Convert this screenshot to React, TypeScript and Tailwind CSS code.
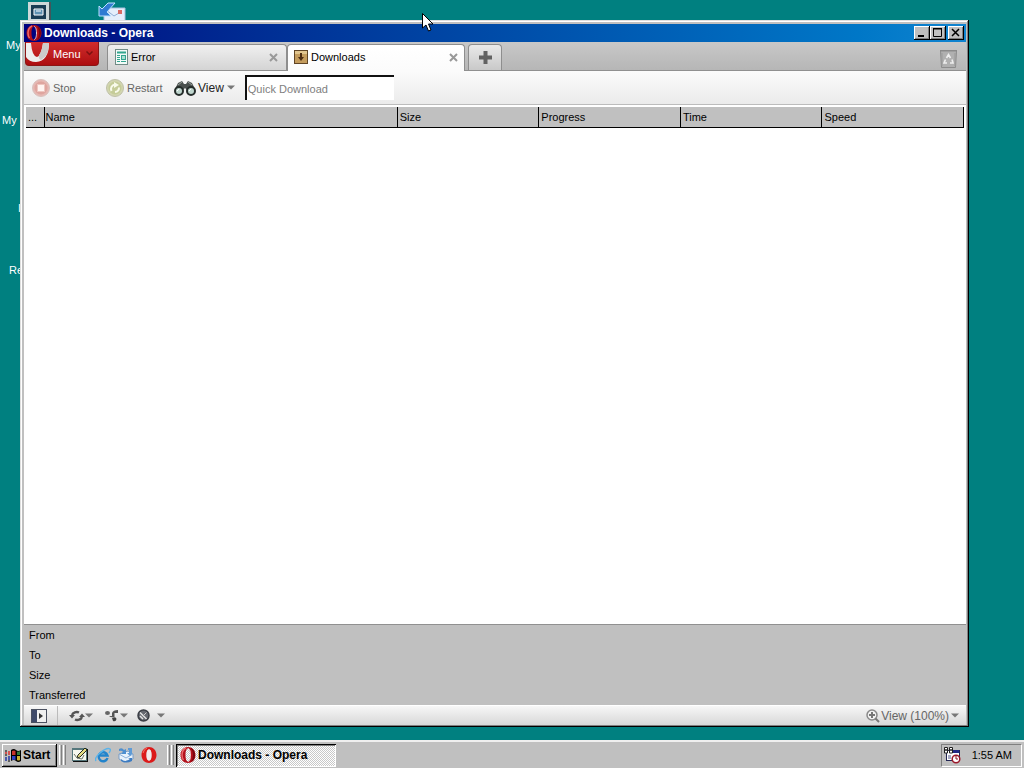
import type { ReactNode } from 'react';

const raised = 'bg-[#c0c0c0] shadow-[inset_-1px_-1px_#000,inset_1px_1px_#fff,inset_-2px_-2px_#808080]';

function OperaLogo() {
  return (
    <svg width="16" height="16" viewBox="0 0 16 16" className="shrink-0" aria-hidden="true">
      <path
        fillRule="evenodd"
        d="M8 0C12 0 15.5 3 15.5 8S12 16 8 16S0.5 13 0.5 8S4 0 8 0ZM8 1.500C6.500 1.500 5.500 4 5.500 8S6.500 14.500 8 14.500S10.500 12 10.500 8S9.500 1.500 8 1.500Z"
        fill="#b3101b"
      />
      <path d="M6 1Q2 3 2 8Q2 11 3.500 13" fill="none" stroke="#ea6a6d" strokeWidth="1.500" />
      <path d="M11 1Q15 3 15 8Q15 13 11 15Q13 12 13 8Q13 4 11 1Z" fill="#79060f" />
      <path d="M8 1.500C9.500 1.500 10.500 4 10.500 8S9.500 14.500 8 14.500" fill="none" stroke="#e9c9c9" />
    </svg>
  );
}

function Caret() {
  return (
    <svg width="8" height="5" viewBox="0 0 8 5" className="shrink-0" aria-hidden="true">
      <path d="M0 0.5H8L4 4.5Z" fill="#777" />
    </svg>
  );
}

function CloseMark() {
  return (
    <svg width="9" height="9" viewBox="0 0 9 9" aria-hidden="true">
      <path d="M1 1L8 8M8 1L1 8" stroke="#999" strokeWidth="2" />
    </svg>
  );
}

function ErrorPageIcon() {
  return (
    <svg width="13" height="16" viewBox="0 0 13 16" aria-hidden="true">
      <rect x="0.5" y="0.5" width="12" height="15" fill="#f3fbf8" stroke="#718b86" />
      <path d="M2 3.500H11" stroke="#32a58f" strokeWidth="2" />
      <path d="M2 6.500H5M2 8.500H5M2 10.500H5M2 12.500H5M6 12.500H11" stroke="#32a58f" />
      <rect x="6.500" y="6.500" width="4" height="4" fill="#a9ded3" stroke="#32a58f" />
    </svg>
  );
}

function DownloadIcon() {
  return (
    <svg width="14" height="14" viewBox="0 0 14 14" aria-hidden="true">
      <rect x="0.5" y="0.5" width="13" height="13" fill="#c49c5d" stroke="#604526" />
      <path d="M1 1H13V4H1Z" fill="#e1c58e" />
      <path d="M6 3H8V7H10L7 11L4 7H6Z" fill="#4b2c12" />
    </svg>
  );
}

function StopIcon() {
  return (
    <svg width="18" height="18" viewBox="0 0 18 18" aria-hidden="true">
      <circle cx="9" cy="9" r="8.5" fill="#e6b8b3" stroke="#d8c0bd" />
      <circle cx="9" cy="9" r="6.5" fill="#dfa59f" />
      <rect x="5.5" y="5.5" width="7" height="7" fill="#fff4f1" stroke="#eec6c0" />
    </svg>
  );
}

function RestartIcon() {
  return (
    <svg width="18" height="18" viewBox="0 0 18 18" aria-hidden="true">
      <circle cx="9" cy="9" r="8.5" fill="#d3d6b0" stroke="#bfc1a8" />
      <circle cx="9" cy="9" r="6.5" fill="#c5cc98" />
      <path d="M5.500 12A4.500 4.500 0 0 1 9 5.500" fill="none" stroke="#f8faea" strokeWidth="2" />
      <path d="M8 3L13 6L8 9Z" fill="#f8faea" />
      <path d="M13 8.500A4.500 4.500 0 0 1 9 13" fill="none" stroke="#f8faea" strokeWidth="2" />
    </svg>
  );
}

function BinocularsIcon() {
  return (
    <svg width="22" height="16" viewBox="0 0 22 16" aria-hidden="true">
      <path d="M1 9L4 3L8 1L10 4H12L14 1L18 3L21 9L14 11L11 8L8 11Z" fill="#4a504e" />
      <path d="M4 5L8 2M14 2L18 5" stroke="#9ba39f" />
      <circle cx="5" cy="11" r="4" fill="#bed5cd" stroke="#252c2a" strokeWidth="2" />
      <circle cx="17" cy="11" r="4" fill="#bed5cd" stroke="#252c2a" strokeWidth="2" />
      <path d="M3 11L5 9M15 11L17 9" stroke="#fff" />
    </svg>
  );
}

function TrashIcon() {
  return (
    <svg width="19" height="20" viewBox="0 0 19 20" aria-hidden="true">
      <path d="M1.500 2H17.500L16.500 18.500H2.500Z" fill="#b0b0b0" stroke="#8c8c8c" />
      <path d="M1 1.500H18" stroke="#8a8a8a" />
      <path d="M3 4V17M16 4V17" stroke="#999" />
      <path d="M7.500 9L9.500 5.500L11.500 9M13 10.500L14 14H11M8 14H5L6.500 10.500" fill="none" stroke="#eee" strokeWidth="1.600" />
    </svg>
  );
}

function PanelIcon() {
  return (
    <svg width="16" height="14" viewBox="0 0 16 14" aria-hidden="true">
      <rect x="0.5" y="0.5" width="15" height="13" fill="#f0f0f0" stroke="#4b5160" />
      <rect x="1" y="1" width="5" height="12" fill="#3f4a69" />
      <path d="M8 4L12 7L8 10Z" fill="#333" />
    </svg>
  );
}

function SyncIcon() {
  return (
    <svg width="16" height="12" viewBox="0 0 16 12" aria-hidden="true">
      <path d="M3 5A5 4.500 0 0 1 10 2.500M13 7A5 4.500 0 0 1 6 9.500" fill="none" stroke="#555" strokeWidth="2.400" />
      <path d="M0 5H6L3 8.500ZM10 7H16L13 3.500Z" fill="#555" />
    </svg>
  );
}

function UniteIcon() {
  return (
    <svg width="14" height="13" viewBox="0 0 14 13" aria-hidden="true">
      <ellipse cx="2.500" cy="4" rx="2.500" ry="2" fill="#666" />
      <path d="M4 7H7V4Q8 1 13 1V4H9.500V8Q6 9 4 7Z" fill="#555" />
      <path d="M7 9Q11 7 11.500 10Q11 13 8 12Z" fill="#444" />
    </svg>
  );
}

function TurboIcon() {
  return (
    <svg width="13" height="13" viewBox="0 0 13 13" aria-hidden="true">
      <circle cx="6.500" cy="6.500" r="5.500" fill="#656870" stroke="#3b3e45" strokeWidth="1.500" />
      <path d="M3 3.500L9.500 10M3 7L6 10" stroke="#e2e2e2" strokeWidth="1.500" />
      <path d="M6 7L9.500 3.500" stroke="#c8c8c8" />
    </svg>
  );
}

function ZoomIcon() {
  return (
    <svg width="14" height="14" viewBox="0 0 14 14" aria-hidden="true">
      <circle cx="6" cy="6" r="5" fill="#f2f2f2" stroke="#8a8a8a" strokeWidth="1.500" />
      <path d="M3 6H9M6 3V9" stroke="#777" strokeWidth="2" />
      <path d="M9.500 9.500L13 13" stroke="#777" strokeWidth="2" />
    </svg>
  );
}

function WindowsFlag() {
  return (
    <svg width="17" height="15" viewBox="0 0 17 15" aria-hidden="true">
      <path d="M6 2Q9 0 11 2T16 2V13Q13 15 11 13T6 13Z" fill="#000" />
      <path d="M7 3Q9 2 10.500 3V7H7Z" fill="#c9332b" />
      <path d="M12 3.500Q13.500 4 15 3V7H12Z" fill="#2d7b3c" />
      <path d="M7 8H10.500V12Q9 11.500 7 12Z" fill="#3043c6" />
      <path d="M12 8H15V12Q13.500 13 12 12Z" fill="#c9b032" />
      <path d="M3 4H5M3 6H5M0 5H2" stroke="#d8322e" strokeWidth="1.500" />
      <path d="M3 9H5M3 11H5M0 10H2M0 12H2" stroke="#2436a4" strokeWidth="1.500" />
      <path d="M0 3H2M0 7H2M3 13H5" stroke="#000" />
    </svg>
  );
}

function ShowDesktopIcon() {
  return (
    <svg width="16" height="16" viewBox="0 0 16 16" aria-hidden="true">
      <path d="M1 2H16V15H1Z" fill="#111" />
      <path d="M0 1H15V14H0Z" fill="#55777c" />
      <path d="M1 3H14V13H1Z" fill="#f6f8ef" />
      <path d="M5 11L6 8L13 1L15 3L8 10Z" fill="#e5dd83" stroke="#262b20" />
      <path d="M2 7L5 11L10 12L12 8" fill="none" stroke="#6e756b" />
    </svg>
  );
}

function ExplorerIcon() {
  return (
    <svg width="16" height="16" viewBox="0 0 16 16" aria-hidden="true">
      <path d="M12.500 11A4.500 4.500 0 1 1 12.500 8.500H5" fill="none" stroke="#2384cc" strokeWidth="2.400" />
      <path d="M1 14Q-1 11 5 6Q12 0 15 2Q16 3 14 6" fill="none" stroke="#5ab3ea" strokeWidth="1.400" />
    </svg>
  );
}

function MailIcon() {
  return (
    <svg width="16" height="16" viewBox="0 0 16 16" aria-hidden="true">
      <path d="M1 7L10 4L15 7V12L6 15L1 12Z" fill="#e8f2fc" stroke="#7a9cc4" />
      <path d="M1 7L8 11L15 7" fill="none" stroke="#8db0d8" />
      <path d="M1 2Q4 0 6 3L8 2V7H3L5 5Q4 3 1 4Z" fill="#4e8fd0" />
      <path d="M10 1H14V7L12 9L9 6H11V3H10Z" fill="#5f9bd6" />
      <path d="M3 12Q7 16 12 12L10 11H14V14Q8 17 3 14Z" fill="#3d7cc2" />
    </svg>
  );
}

function QuickOperaIcon() {
  return (
    <svg width="16" height="16" viewBox="0 0 16 16" aria-hidden="true">
      <path
        fillRule="evenodd"
        d="M8 0C12 0 15.500 3 15.500 8S12 16 8 16S0.500 13 0.500 8S4 0 8 0ZM8 2.500C6 2.500 5.500 5 5.500 8S6 13.500 8 13.500S10.500 11 10.500 8S10 2.500 8 2.500Z"
        fill="#dc1a1a"
      />
      <path d="M8 2.500C10 2.500 10.500 5 10.500 8S10 13.500 8 13.500S5.500 11 5.500 8S6 2.500 8 2.500Z" fill="#f4eaea" />
      <path d="M2 6Q3 2 6 1" stroke="#f47666" fill="none" />
    </svg>
  );
}

function SchedulerIcon() {
  return (
    <svg width="17" height="17" viewBox="0 0 17 17" aria-hidden="true">
      <rect x="2.500" y="3.500" width="13" height="10" fill="#fff" stroke="#222653" />
      <path d="M8 4.500H15" stroke="#202884" strokeWidth="3" />
      <path d="M0.500 0.500H3.500V3H0.500ZM0.500 3H3.500V6H0.500ZM5.500 0.500H8.500V3H5.500ZM5.500 3H8.500V6H5.500Z" fill="#fff" stroke="#222" />
      <path d="M4 9H7M4 11H7" stroke="#51578c" />
      <circle cx="12" cy="12" r="3.800" fill="#fff" stroke="#9b1729" strokeWidth="1.500" />
      <path d="M12 9V12H14" fill="none" stroke="#861020" />
    </svg>
  );
}

function CaptionButton({ label, children }: { label: string; children: ReactNode }) {
  return (
    <button aria-label={label} className={`flex h-[14px] w-4 items-center justify-center ${raised}`}>
      <svg width="16" height="14" viewBox="0 0 16 14" aria-hidden="true" fill="none" stroke="#000">
        {children}
      </svg>
    </button>
  );
}

function TitleBar() {
  return (
    <header className="flex h-[18px] shrink-0 items-center bg-linear-to-r from-[#000080] to-[#1084d0] pr-[2px] pl-[2px] text-white">
      <OperaLogo />
      <h1 className="ml-[2px] flex-1 text-[12px] leading-4 font-bold">Downloads - Opera</h1>
      <div className="flex">
        <CaptionButton label="Minimize">
          <path d="M4 10H10" strokeWidth="2" />
        </CaptionButton>
        <CaptionButton label="Maximize">
          <path d="M3.500 2V10.500H11.500V2M3 3H12" />
          <path d="M3 2.500H12" />
        </CaptionButton>
        <div className="ml-[2px]">
          <CaptionButton label="Close">
            <path d="M4 3L11 10M11 3L4 10" strokeWidth="1.500" />
          </CaptionButton>
        </div>
      </div>
    </header>
  );
}

function TabBar() {
  return (
    <nav className="flex h-[29px] shrink-0 items-end border-b border-[#909090] bg-linear-to-b from-[#c8c8c8] to-[#b6b6b6]">
      <button className="ml-px flex h-6 w-[74px] shrink-0 items-center self-start overflow-hidden rounded-b-sm border border-t-0 border-[#8c1515] bg-linear-to-b from-[#d12c2c] to-[#ad0c10] text-white">
        <svg width="25" height="22" viewBox="0 0 25 22" aria-hidden="true">
          <path d="M0 0H5Q6 13 11 14Q15 13 17 0H23Q23 18 10 19Q3 19 0 14Z" fill="#eee" />
          <path d="M17 0H23Q23 13 15 17Q12 16 13 12Q16 8 17 0Z" fill="#ccc" />
        </svg>
        <span className="ml-[2px]">Menu</span>
        <svg width="7" height="5" viewBox="0 0 7 5" className="ml-[5px]" aria-hidden="true">
          <path d="M0.500 0.500L3.500 3.500L6.500 0.500" fill="none" stroke="#7d1010" strokeWidth="1.500" />
        </svg>
      </button>
      <div className="ml-2 flex h-[26px] w-[180px] items-center rounded-t border border-b-0 border-[#8e8e8e] bg-linear-to-b from-[#f0f0f0] to-[#d4d4d4] pr-2 pb-px pl-[7px]">
        <button className="flex flex-1 items-center gap-[3px]">
          <ErrorPageIcon />
          Error
        </button>
        <button aria-label="Close Error">
          <CloseMark />
        </button>
      </div>
      <div className="-mb-px flex h-[27px] w-[178px] items-center rounded-t border border-b-0 border-[#8e8e8e] bg-linear-to-b from-white to-[#fbfbfb] px-[6px] pb-[2px]">
        <button className="flex flex-1 items-center gap-[3px]">
          <DownloadIcon />
          Downloads
        </button>
        <button aria-label="Close Downloads">
          <CloseMark />
        </button>
      </div>
      <button
        aria-label="New tab"
        className="ml-[3px] flex h-[26px] w-[34px] items-center justify-center rounded-t border border-b-0 border-[#8e8e8e] bg-linear-to-b from-[#e9e9e9] to-[#c9c9c9]"
      >
        <svg width="13" height="13" viewBox="0 0 13 13" aria-hidden="true">
          <path d="M6.500 0V13M0 6.500H13" stroke="#626262" strokeWidth="4" />
        </svg>
      </button>
      <button aria-label="Closed tabs" className="mr-2 mb-px ml-auto">
        <TrashIcon />
      </button>
    </nav>
  );
}

function Toolbar() {
  return (
    <div className="flex h-[34px] shrink-0 items-center border-b border-[#bcbcbc] bg-linear-to-b from-[#fbfbfb] to-[#ebebeb] pl-2 text-[#666]">
      <button className="flex w-[74px] items-center gap-[3px]">
        <StopIcon />
        Stop
      </button>
      <button className="flex w-[68px] items-center gap-[3px]">
        <RestartIcon />
        Restart
      </button>
      <button className="flex items-center gap-[2px] text-[12px] text-[#222]">
        <BinocularsIcon />
        View
        <span className="ml-px">
          <Caret />
        </span>
      </button>
      <input
        type="text"
        aria-label="Quick Download"
        placeholder="Quick Download"
        className="ml-[10px] h-[25px] w-[149px] border-t-2 border-l-2 border-t-[#111] border-l-[#111] bg-white px-px text-[11px] text-black outline-none placeholder:text-[#808080]"
      />
    </div>
  );
}

function TransferList() {
  return (
    <main className="flex-1 bg-white px-[2px] pt-[2px]">
      <table className="w-full table-fixed border-collapse">
        <thead>
          <tr className="h-5 border-b border-black bg-[#c0c0c0] text-left">
            <th className="w-[18px] border-r border-black pl-[2px] font-normal">...</th>
            <th className="border-r border-black pl-px font-normal">Name</th>
            {['Size', 'Progress', 'Time', 'Speed'].map((column) => (
              <th key={column} className="w-[15.1%] border-r border-black pl-[2px] font-normal">
                {column}
              </th>
            ))}
          </tr>
        </thead>
      </table>
    </main>
  );
}

function StatusBar() {
  return (
    <footer className="flex h-5 shrink-0 items-center border-t border-white bg-linear-to-b from-[#f7f7f7] to-[#d8d8d8] text-[#666]">
      <div className="flex h-full w-[34px] items-center border-r border-[#bbb] pl-[7px]">
        <button aria-label="Panels">
          <PanelIcon />
        </button>
      </div>
      <button aria-label="Synchronize" className="ml-[11px] flex w-9 items-center">
        <SyncIcon />
        <Caret />
      </button>
      <button aria-label="Unite" className="flex w-8 items-center gap-px">
        <UniteIcon />
        <Caret />
      </button>
      <button aria-label="Turbo" className="flex items-center gap-[7px]">
        <TurboIcon />
        <Caret />
      </button>
      <button className="mr-[7px] ml-auto flex items-center gap-px text-[12px]">
        <ZoomIcon />
        View (100%)
        <span className="ml-px">
          <Caret />
        </span>
      </button>
    </footer>
  );
}

function DesktopIcons() {
  return (
    <div className="text-white">
      <svg className="absolute top-[2px] left-7" width="23" height="20" viewBox="0 0 23 20" aria-hidden="true">
        <path d="M0 0H23V20H0Z" fill="#42565b" />
        <path d="M0 0H21V20H0Z" fill="#ccd9d9" />
        <path d="M3 3H18V17H3Z" fill="#183d54" />
        <path d="M6 7H15V13H6Z" fill="#5d92b1" stroke="#fff" />
        <path d="M8 9H13" stroke="#fff" />
      </svg>
      <svg className="absolute top-[2px] left-[98px]" width="28" height="20" viewBox="0 0 28 20" aria-hidden="true">
        <path d="M6 6H27V20H6Z" fill="#e4eefb" stroke="#a9c0de" />
        <path d="M8 8L16 14L21 11" fill="none" stroke="#8fadd5" />
        <path d="M20 8H24V12H20Z" fill="#d76b64" />
        <path d="M10 1H17L9 10L13 14H1V4L4 7Z" fill="#2f7bd2" stroke="#bce2ff" />
      </svg>
      <span className="absolute top-[38px] left-[6px]">My</span>
      <span className="absolute top-[113px] left-[2px]">My</span>
      <span className="absolute top-[201px] left-[18px]">I</span>
      <span className="absolute top-[263px] left-[9px]">Re</span>
    </div>
  );
}

function Grip() {
  return (
    <span className="flex gap-px">
      <span className="h-5 w-[3px] border-r border-l border-r-[#808080] border-l-white" />
      <span className="h-5 w-[3px] border-r border-l border-r-[#808080] border-l-white" />
    </span>
  );
}

function Taskbar() {
  return (
    <div className="flex h-7 shrink-0 items-center border-t-2 border-[#efefef] bg-[#c0c0c0] px-[2px]">
      <button className={`flex h-[23px] w-[55px] items-center gap-px pl-[3px] text-[12px] font-bold ${raised}`}>
        <WindowsFlag />
        Start
      </button>
      <div className="ml-[2px] flex items-center">
        <Grip />
        <div className="mx-[6px] flex gap-[7px]">
          <button aria-label="Show desktop"><ShowDesktopIcon /></button>
          <button aria-label="Internet Explorer"><ExplorerIcon /></button>
          <button aria-label="Mail"><MailIcon /></button>
          <button aria-label="Opera"><QuickOperaIcon /></button>
        </div>
      </div>
      <div className="ml-1 flex items-center gap-[2px]">
        <Grip />
        <button className="flex h-[23px] w-40 items-center gap-[2px] bg-[#dfdfdf] bg-[repeating-conic-gradient(#fff_0_25%,#c8c8c8_0_50%)] bg-size-[2px_2px] pl-1 text-[12px] font-bold shadow-[inset_1px_1px_#000,inset_-1px_-1px_#fff,inset_2px_2px_#808080]">
          <OperaLogo />
          Downloads - Opera
        </button>
      </div>
      <div className="ml-auto flex h-[23px] w-[81px] items-center justify-between border border-t-[#808080] border-r-white border-b-white border-l-[#808080] pr-[9px] pl-[2px]">
        <SchedulerIcon />
        <time>1:55 AM</time>
      </div>
    </div>
  );
}

export default function App() {
  return (
    <div className="flex h-screen cursor-default flex-col overflow-hidden bg-[#008080] font-['Liberation_Sans',Arial,sans-serif] text-[11px] leading-[14px] text-black">
      <div className="relative flex-1">
        <DesktopIcons />
        <section className="absolute top-5 right-[55px] bottom-[13px] left-5 flex flex-col bg-[#c0c0c0] pt-1 pr-[3px] pb-[2px] pl-1 shadow-[inset_-1px_-1px_#000,inset_1px_1px_#dfdfdf,inset_-2px_-2px_#808080,inset_2px_2px_#fff]">
          <TitleBar />
          <TabBar />
          <Toolbar />
          <TransferList />
          <dl className="shrink-0 border-t border-[#909090] pl-[5px] leading-5">
            {['From', 'To', 'Size', 'Transferred'].map((field) => (
              <dt key={field}>{field}</dt>
            ))}
          </dl>
          <StatusBar />
        </section>
        {/* Mouse pointer */}
        <svg className="absolute top-[13px] left-[422px]" width="12" height="20" viewBox="0 0 12 20" aria-hidden="true">
          <path d="M0.500 0.500V15L4 12L6.500 18L9 17L6.500 11H11Z" fill="#fff" stroke="#000" />
        </svg>
      </div>
      <Taskbar />
    </div>
  );
}
